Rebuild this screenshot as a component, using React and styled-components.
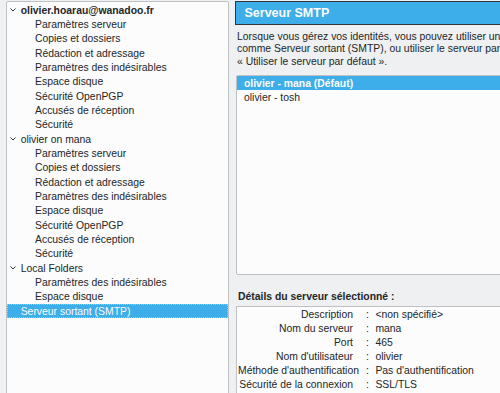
import React from "react";
import styled, { createGlobalStyle } from "styled-components";

const Global = createGlobalStyle`
  html, body { margin: 0; padding: 0; background: #eff0f1; overflow: hidden; }
  body { font-family: "Liberation Sans", Arial, sans-serif; color: #232627; }
`;

const Page = styled.div`
  display: flex;
  align-items: flex-start;
  gap: 6px;
  width: 500px;
  height: 393px;
  box-sizing: border-box;
  padding: 1px 0 0 6px;
  overflow: hidden;
  background: #eff0f1;
  font-size: 10.4px;
`;

const Tree = styled.div`
  flex-shrink: 0;
  width: 223px;
  height: 420px;
  box-sizing: border-box;
  background: #fcfcfc;
  border: 1px solid #bfc1c3;
  border-radius: 2px;
  padding-top: 1px;
`;

const Row = styled.div`
  display: flex;
  align-items: center;
  height: 14.333px;
  box-sizing: border-box;
  white-space: nowrap;
  padding-left: ${(p) => (p.$level === 0 ? "13.7px" : "28px")};
  position: relative;
  font-weight: ${(p) => (p.$bold ? 700 : 400)};
  background: ${(p) => (p.$selected ? "#3daee9" : "transparent")};
  color: ${(p) => (p.$selected ? "#fcfcfc" : "#232627")};
  outline: ${(p) => (p.$selected ? "1px dotted #8fd0f2" : "none")};
  outline-offset: -1px;
`;

const Arrow = styled.svg`
  position: absolute;
  left: 3px;
  top: 5px;
`;

const Right = styled.div`
  flex-shrink: 0;
  width: 320px;
  display: flex;
  flex-direction: column;
`;

const Header = styled.div`
  height: 24px;
  box-sizing: border-box;
  background: #3daee9;
  border: 1px solid #31363b;
  color: #fcfcfc;
  font-weight: 700;
  font-size: 12.5px;
  display: flex;
  align-items: center;
  padding-left: 8.5px;
`;

const Intro = styled.div`
  margin-top: 5.5px;
  padding-left: 2px;
  line-height: 12.6px;
  white-space: nowrap;
`;

const ListBox = styled.div`
  margin: 7px 0 0 1px;
  height: 200px;
  box-sizing: border-box;
  background: #fcfcfc;
  border: 1px solid #bfc1c3;
  border-radius: 2px;
`;

const ListItem = styled.div`
  height: 14px;
  display: flex;
  align-items: center;
  padding-left: 7px;
  white-space: nowrap;
  font-weight: ${(p) => (p.$selected ? 700 : 400)};
  background: ${(p) => (p.$selected ? "#3daee9" : "transparent")};
  color: ${(p) => (p.$selected ? "#fcfcfc" : "#232627")};
`;

const DetailsTitle = styled.div`
  margin-top: 15px;
  padding-left: 3px;
  line-height: 14px;
  font-weight: 700;
`;

const DetailsBox = styled.div`
  margin: 2px 0 0 1px;
  height: 120px;
  box-sizing: border-box;
  background: #fcfcfc;
  border: 1px solid #bfc1c3;
  display: grid;
  grid-template-columns: 115px auto 1fr;
  column-gap: 0;
  grid-auto-rows: 14.1px;
  align-content: start;
  padding: 0.5px 0 0 1px;
`;

const Label = styled.div`
  text-align: right;
  white-space: nowrap;
  line-height: 14.1px;
`;

const Colon = styled.div`
  line-height: 14.1px;
  padding: 0 6.5px 0 13px;
`;

const Value = styled.div`
  white-space: nowrap;
  line-height: 14.1px;
`;

const Chevron = () => (
  <Arrow width="6" height="4" viewBox="0 0 6 4">
    <path d="M0.5 0.5 L3 3 L5.5 0.5" fill="none" stroke="#31363b" strokeWidth="1" />
  </Arrow>
);

const subs = [
  "Paramètres serveur",
  "Copies et dossiers",
  "Rédaction et adressage",
  "Paramètres des indésirables",
  "Espace disque",
  "Sécurité OpenPGP",
  "Accusés de réception",
  "Sécurité",
];

const tree = [
  { label: "olivier.hoarau@wanadoo.fr", bold: true, children: subs },
  { label: "olivier on mana", children: subs },
  { label: "Local Folders", children: ["Paramètres des indésirables", "Espace disque"] },
];

const details = [
  ["Description", "<non spécifié>"],
  ["Nom du serveur", "mana"],
  ["Port", "465"],
  ["Nom d'utilisateur", "olivier"],
  ["Méthode d'authentification", "Pas d'authentification"],
  ["Sécurité de la connexion", "SSL/TLS"],
];

export default function App() {
  return (
    <>
      <Global />
      <Page>
        <Tree>
          {tree.map((acc) => (
            <React.Fragment key={acc.label}>
              <Row $level={0} $bold={acc.bold}>
                <Chevron />
                {acc.label}
              </Row>
              {acc.children.map((c, i) => (
                <Row key={acc.label + i} $level={1}>
                  {c}
                </Row>
              ))}
            </React.Fragment>
          ))}
          <Row $level={0} $selected>
            Serveur sortant (SMTP)
          </Row>
        </Tree>
        <Right>
          <Header>Serveur SMTP</Header>
          <Intro>
            Lorsque vous gérez vos identités, vous pouvez utiliser un serveur de cette liste en le sélectionnant
            <br />
            comme Serveur sortant (SMTP), ou utiliser le serveur par défaut de cette liste en sélectionnant
            <br />
            « Utiliser le serveur par défaut ».
          </Intro>
          <ListBox>
            <ListItem $selected>olivier - mana (Défaut)</ListItem>
            <ListItem>olivier - tosh</ListItem>
          </ListBox>
          <DetailsTitle>Détails du serveur sélectionné :</DetailsTitle>
          <DetailsBox>
            {details.map(([l, v]) => (
              <React.Fragment key={l}>
                <Label>{l}</Label>
                <Colon>:</Colon>
                <Value>{v}</Value>
              </React.Fragment>
            ))}
          </DetailsBox>
        </Right>
      </Page>
    </>
  );
}
